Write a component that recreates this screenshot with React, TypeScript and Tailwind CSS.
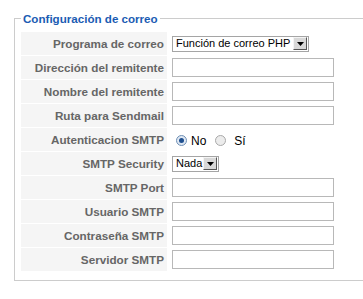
import React from "react";

const font = { fontFamily: '"Liberation Sans", Arial, sans-serif' };

function Arrow() {
  return (
    <span className="flex h-[13px] w-[14px] items-center justify-center border border-t-[#f4f4f4] border-l-[#f4f4f4] border-r-[#555] border-b-[#555] bg-[#d8d8d8]">
      <svg width="7" height="4" viewBox="0 0 7 4">
        <path d="M0 0 L7 0 L3.5 4 Z" fill="#000" />
      </svg>
    </span>
  );
}

function Select({ text, w }: { text: string; w: string }) {
  return (
    <div className={`flex h-[16px] items-center justify-between border border-[#a5a5a5] bg-white pl-[3px] pr-px ${w}`}>
      <span className="text-[11px] leading-none text-black">{text}</span>
      <Arrow />
    </div>
  );
}

function Input() {
  return <div className="h-[19px] w-[162px] border border-[#b8b8b8] bg-white" />;
}

function Radio({ checked }: { checked: boolean }) {
  return (
    <span
      className={`flex h-[11px] w-[11px] items-center justify-center rounded-full border ${
        checked ? "border-[#6f8fb5] bg-[#dfe8f3]" : "border-[#a9a9a9] bg-[#ececec]"
      }`}
    >
      {checked && <span className="h-[5px] w-[5px] rounded-full bg-[#1f4f8f]" />}
    </span>
  );
}

const rows: { label: string; el: React.ReactNode }[] = [
  { label: "Programa de correo", el: <Select text="Función de correo PHP" w="w-[137px]" /> },
  { label: "Dirección del remitente", el: <Input /> },
  { label: "Nombre del remitente", el: <Input /> },
  { label: "Ruta para Sendmail", el: <Input /> },
  {
    label: "Autenticacion SMTP",
    el: (
      <div className="flex items-center pl-[4px] pt-[2px] text-[12px] text-black">
        <Radio checked />
        <span className="ml-[4px]">No</span>
        <span className="ml-[9px]">
          <Radio checked={false} />
        </span>
        <span className="ml-[8px]">Sí</span>
      </div>
    ),
  },
  { label: "SMTP Security", el: <Select text="Nada" w="w-[47px]" /> },
  { label: "SMTP Port", el: <Input /> },
  { label: "Usuario SMTP", el: <Input /> },
  { label: "Contraseña SMTP", el: <Input /> },
  { label: "Servidor SMTP", el: <Input /> },
];

export default function App() {
  return (
    <div className="h-[299px] w-[363px] overflow-hidden bg-white" style={font}>
      <fieldset className="ml-[14px] mt-[11px] w-[380px] border border-[#cccccc] pb-[9px] pl-[6px]">
        <legend className="px-[2px] text-[11.6px] font-bold leading-[15px] text-[#1b5cb3]">
          Configuración de correo
        </legend>
        <div className="mt-[6px] flex flex-col gap-px">
          {rows.map((r) => (
            <div key={r.label} className="flex h-[23px]">
              <div className="flex w-[146px] items-center justify-end bg-[#f5f5f5] pr-[3px] text-[11.7px] font-bold text-[#666666]">
                {r.label}
              </div>
              <div className="flex items-center pl-[5px]">{r.el}</div>
            </div>
          ))}
        </div>
      </fieldset>
    </div>
  );
}
